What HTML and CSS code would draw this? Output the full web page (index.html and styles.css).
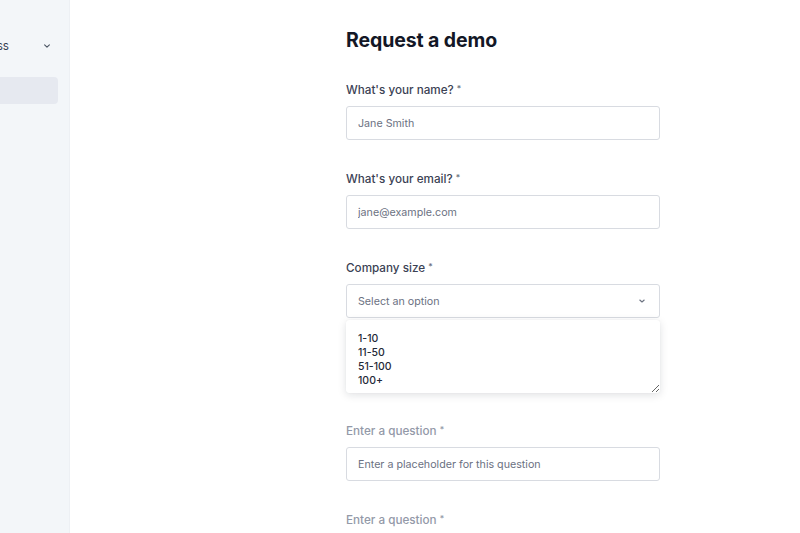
FILE: index.html
```html
<!DOCTYPE html>
<html lang="en">
<head>
<meta charset="utf-8">
<title>Request a demo</title>
<link rel="stylesheet" href="styles.css">
</head>
<body>
<aside class="sidebar">
  <div class="nav-row">
    <span class="nav-text">Business</span>
    <svg class="nav-chev" width="8" height="8" viewBox="0 0 8 8"><path d="M1.6 2.8 L4 5.2 L6.4 2.8" fill="none" stroke="#4b5563" stroke-width="1.1" stroke-linecap="round" stroke-linejoin="round"/></svg>
  </div>
  <div class="nav-active"></div>
</aside>
<main class="main">
  <form class="form">
    <h1 class="title">Request a demo</h1>

    <div class="field">
      <label class="label">What's your name? <span class="req">*</span></label>
      <input class="input" type="text" placeholder="Jane Smith">
    </div>

    <div class="field">
      <label class="label">What's your email? <span class="req">*</span></label>
      <input class="input" type="text" placeholder="jane@example.com">
    </div>

    <div class="field field-select">
      <label class="label">Company size <span class="req">*</span></label>
      <div class="select">
        <span class="select-text">Select an option</span>
        <svg width="8" height="8" viewBox="0 0 8 8"><path d="M1.8 3 L4 5 L6.2 3" fill="none" stroke="#6b7280" stroke-width="1.1" stroke-linecap="round" stroke-linejoin="round"/></svg>
      </div>
      <textarea class="options">1-10
11-50
51-100
100+</textarea>
    </div>

    <div class="field">
      <label class="label label-muted">Enter a question <span class="req">*</span></label>
      <input class="input" type="text" placeholder="Enter a placeholder for this question">
    </div>

    <div class="field">
      <label class="label label-muted">Enter a question <span class="req">*</span></label>
    </div>
  </form>
</main>
</body>
</html>
```

FILE: styles.css
```css
* { box-sizing: border-box; }
html, body { margin: 0; padding: 0; }
body {
  display: flex;
  width: 800px;
  height: 533px;
  overflow: hidden;
  background: #ffffff;
  font-family: Inter, "Noto Sans", sans-serif;
  color: #111827;
}
.sidebar {
  width: 70px;
  flex: none;
  background: #f3f6f9;
  border-right: 1px solid #edf0f4;
  overflow: hidden;
  padding-top: 33px;
}
.nav-row {
  display: flex;
  align-items: center;
  justify-content: space-between;
  width: 150px;
  height: 26px;
  margin-left: -91px;
  padding-right: 8px;
}
.nav-text {
  width: 100px;
  text-align: right;
  font-size: 11.7px;
  color: #374151;
}
.nav-active {
  width: 58px;
  height: 27px;
  margin-top: 18px;
  background: #e6e9f0;
  border-radius: 0 4px 4px 0;
}
.main {
  flex: 1;
  padding-left: 276px;
  padding-top: 26px;
}
.form { width: 314px; }
.title {
  margin: 0;
  font-size: 19.5px;
  line-height: 28px;
  font-weight: 700;
  letter-spacing: -0.1px;
  color: #131726;
}
.field { margin-top: 26px; }
.field + .field { margin-top: 29px; }
.field-select + .field { margin-top: 28px; }
.label {
  display: block;
  height: 20px;
  font-size: 11.7px;
  line-height: 20px;
  font-weight: 500;
  color: #3b4254;
  margin-bottom: 6px;
}
.label-muted { color: #9399a8; }
.req {
  font-size: 8.5px;
  line-height: 0;
  color: #6b7280;
  vertical-align: 2px;
}
.label-muted .req { color: #9399a8; }
.input, .select {
  display: flex;
  align-items: center;
  width: 100%;
  height: 34px;
  margin: 0;
  border: 1px solid #d8dbe1;
  border-radius: 3px;
  padding: 0 12px 0 11px;
  font-family: Inter, "Noto Sans", sans-serif;
  font-size: 10.7px;
  color: #111827;
  background: #fff;
  outline: none;
}
.input::placeholder { color: #6b7182; }
.select { justify-content: space-between; padding-right: 13px; }
.select-text { font-size: 10.7px; color: #6b7182; }
.options {
  display: block;
  width: 100%;
  height: 73px;
  margin: 2px 0 0;
  border: none;
  border-radius: 3px;
  box-shadow: 0 2px 8px rgba(17, 24, 39, 0.13), 0 0 1px rgba(17, 24, 39, 0.08);
  padding: 12px 12px 4px;
  font-family: Inter, "Noto Sans", sans-serif;
  font-size: 10.5px;
  line-height: 14px;
  font-weight: 500;
  color: #1f2937;
  background: #fff;
  outline: none;
  resize: vertical;
  overflow: hidden;
}
```
